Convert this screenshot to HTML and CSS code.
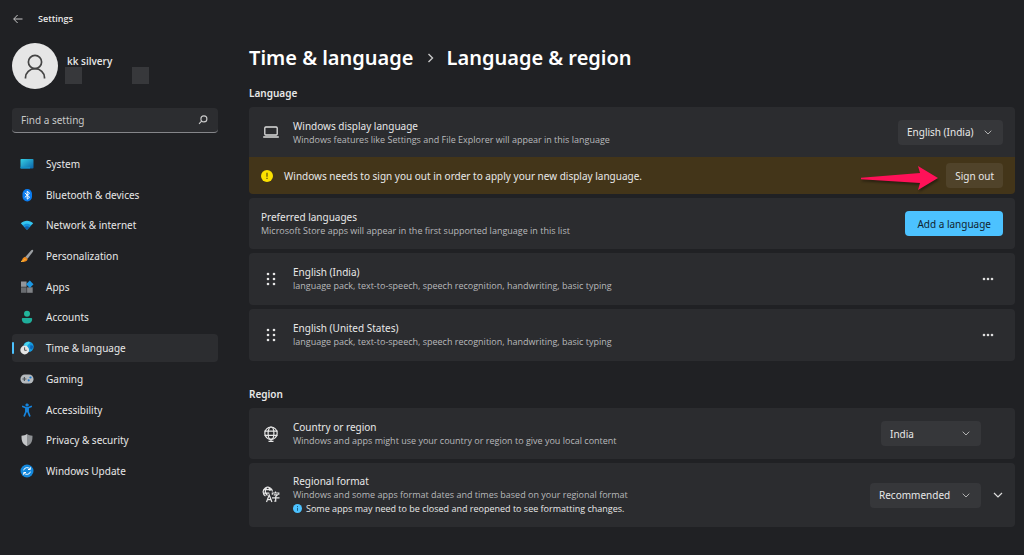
FILE: index.html
```html
<!DOCTYPE html>
<html lang="en">
<head>
  <meta charset="UTF-8">
  <meta name="viewport" content="width=device-width, initial-scale=1.0">
  <title>Settings</title>
  <link rel="stylesheet" href="styles.css">
</head>
<body>
  <div class="app">
    <aside class="sidebar">
      <div class="topbar">
        <button class="back" aria-label="Back">
          <svg width="10" height="10" viewBox="0 0 10 10" fill="none" stroke="#c8c8c8"><path d="M9.5 5H.8M4.6 1L.7 5l3.9 4"/></svg>
        </button>
        <span>Settings</span>
      </div>
      <div class="profile">
        <div class="avatar">
          <svg width="22" height="26" viewBox="0 0 22 26" fill="none" stroke="#444" stroke-width="1.7"><circle cx="11" cy="9" r="6.6"/><path d="M1.500 25.500v-1a9.500 8.800 0 0 1 19 0v1"/></svg>
        </div>
        <div class="user">
          <strong>kk silvery</strong>
          <div class="masks"><i></i><i></i></div>
        </div>
      </div>
      <div class="search">
        <input type="text" placeholder="Find a setting" aria-label="Find a setting">
        <svg width="10" height="10" viewBox="0 0 10 10" fill="none" stroke="#ccc" stroke-width="1.1"><circle cx="5.9" cy="3.9" r="3"/><path d="M3.6 6.2L1 8.800"/></svg>
      </div>
      <nav>
        <ul class="nav">
          <li><a href="#">
            <svg width="14" height="14" viewBox="0 0 14 14"><defs><linearGradient id="sys" x2="1" y2="1"><stop stop-color="#35d0e4"/><stop offset="1" stop-color="#0b62a8"/></linearGradient></defs><rect x=".5" y="2" width="13" height="9.5" rx=".8" fill="url(#sys)"/><path d="M.5 9.8h9.5v1.7H.5z" fill="#1591c6"/></svg>
            <span>System</span></a></li>
          <li><a href="#">
            <svg width="14" height="14" viewBox="0 0 14 14"><rect x="2.5" y="1" width="9.5" height="12.4" rx="4.7" fill="#0a7cf0"/><path d="M4.800 5l4.800 4.200-2.400 2V3.200l2.400 2L4.800 9.400" fill="none" stroke="#fff" stroke-width="1"/></svg>
            <span>Bluetooth &amp; devices</span></a></li>
          <li><a href="#">
            <svg width="14" height="14" viewBox="0 0 14 14"><path d="M.8 5.2C4 1.800 10 1.800 13.200 5.200L7 11.800z" fill="#35c5ef"/><path d="M2.800 7.300C5 5.200 9 5.200 11.200 7.300L7 11.800z" fill="#1591d8"/><path d="M4.600 9.200c1.400-1.200 3.400-1.200 4.800 0L7 11.800z" fill="#0b5fae"/></svg>
            <span>Network &amp; internet</span></a></li>
          <li><a href="#">
            <svg width="14" height="14" viewBox="0 0 14 14"><path d="M12.800.9c.7.5.4 1.300-.1 2L7.600 9.700 5.300 8 11 1.600c.6-.6 1.200-1 1.800-.7z" fill="#9ca0a4"/><path d="M5.200 7.800l2.400 2c.2 2.400-3 3.800-6.600 2.700C2.600 11.500 2 8.600 5.200 7.800z" fill="#f08a1d"/><path d="M1 12.500c2-.3 3.200-1 4.300-2.400" fill="none" stroke="#ffc03d"/></svg>
            <span>Personalization</span></a></li>
          <li><a href="#">
            <svg width="14" height="14" viewBox="0 0 14 14"><path d="M1 1.500h5.600v5.300H1z" fill="#92959a"/><path d="M1 7.300h5.600v5.500H1z" fill="#696c70"/><path d="M7.100 7.300h5.600v5.500H7.100z" fill="#7f8286"/><path d="M9.800.5l3.700 3.700-3.700 3.700-3.700-3.700z" fill="#1b98e4"/></svg>
            <span>Apps</span></a></li>
          <li><a href="#">
            <svg width="14" height="14" viewBox="0 0 14 14"><circle cx="7" cy="3.700" r="3" fill="#22b59b"/><path d="M2.800 8h8.400a1 1 0 0 1 1 1c0 3-2 4.500-5.200 4.500S1.800 12 1.800 9a1 1 0 0 1 1-1z" fill="#1fae9b"/></svg>
            <span>Accounts</span></a></li>
          <li class="current"><a href="#" aria-current="page">
            <svg width="14" height="14" viewBox="0 0 14 14"><circle cx="8.500" cy="5.700" r="5.200" fill="#159be0"/><path d="M4 3.500C6 .5 9 .2 10 1.300c-.3 2-2.500 2-3 4.400z" fill="#49d5ed"/><path d="M10.500 4l2.900 1-1.400 3.500-2-1z" fill="#0b65bb"/><circle cx="4.700" cy="9" r="4.400" fill="#e4e4e4"/><path d="M4.600 6.300v3h2.100" fill="none" stroke="#555"/></svg>
            <span>Time &amp; language</span></a></li>
          <li><a href="#">
            <svg width="14" height="14" viewBox="0 0 14 14"><rect x=".5" y="2.500" width="13" height="9" rx="4.300" fill="#b4b9bd"/><path d="M4.400 5v4M2.400 7h4" stroke="#50565b" stroke-width="1.200"/><circle cx="10.500" cy="5.500" r="1.100" fill="#1678d0"/><circle cx="8.700" cy="8.300" r="1.100" fill="#1678d0"/></svg>
            <span>Gaming</span></a></li>
          <li><a href="#">
            <svg width="14" height="14" viewBox="0 0 14 14" fill="none" stroke="#1684dc" stroke-width="1.700" stroke-linecap="round" stroke-linejoin="round"><circle cx="7" cy="2" r="1.300" fill="#1684dc" stroke-width=".6"/><path d="M2.800 3.500L7 5.200l4.200-1.700M5.900 5v4L4.300 12.800M8.100 5v4l1.600 3.800M7 5v3.500"/></svg>
            <span>Accessibility</span></a></li>
          <li><a href="#">
            <svg width="14" height="14" viewBox="0 0 14 14"><path d="M7 1c1.600 1.300 3.300 1.700 5.500 1.700 0 5-.6 8-5.500 10.500z" fill="#8d9093"/><path d="M7 1C5.400 2.300 3.700 2.700 1.500 2.700c0 5 .6 8 5.500 10.500z" fill="#c4c6c8"/></svg>
            <span>Privacy &amp; security</span></a></li>
          <li><a href="#">
            <svg width="14" height="14" viewBox="0 0 14 14" fill="none" stroke="#fff"><circle cx="7" cy="7" r="6.500" fill="#1488dc" stroke="none"/><path d="M3.600 6.300A3.500 3.500 0 0 1 10 5.300M10.300 3.200v2.300H8M10.400 7.700A3.500 3.500 0 0 1 4 8.700M3.700 10.800V8.500H6"/></svg>
            <span>Windows Update</span></a></li>
        </ul>
      </nav>
    </aside>

    <main>
      <h1>
        <a href="#">Time &amp; language</a>
        <svg width="7" height="10" viewBox="0 0 7 10" fill="none" stroke="#c8c8c8" stroke-width="1.400"><path d="M1.500 1l4 4-4 4"/></svg>
        <span>Language &amp; region</span>
      </h1>

      <section>
        <h2>Language</h2>
        <div class="group">
          <div class="card">
            <div class="icon">
              <svg width="16" height="12" viewBox="0 0 16 12" fill="none" stroke="#ddd" stroke-width="1.300"><rect x="1.800" y="1" width="12.400" height="8" rx="1"/><path d="M.2 11h15.600"/></svg>
            </div>
            <div class="text">
              <label class="title" for="display">Windows display language</label>
              <p>Windows features like Settings and File Explorer will appear in this language</p>
            </div>
            <div class="select display">
              <select id="display"><option>English (India)</option></select>
              <svg width="8" height="5" viewBox="0 0 8 5"><path d="M.7.7L4 4 7.300.7"/></svg>
            </div>
          </div>
          <div class="warning">
            <svg class="alert" width="12" height="12" viewBox="0 0 12 12"><circle cx="6" cy="6" r="6" fill="#fce100"/><path d="M6 2.800v3.900M6 7.800v1.300" stroke="#5a4c10" stroke-width="1.200"/></svg>
            <p>Windows needs to sign you out in order to apply your new display language.</p>
            <button class="btn">Sign out</button>
            <svg class="arrow" width="80" height="28" viewBox="0 0 80 28"><path d="M1 15.200v-1.400L60 9 58 2l20 12-20 12 2-7z" fill="#ff1158"/></svg>
          </div>
        </div>
        <div class="card preferred">
          <div class="text">
            <h3 class="title">Preferred languages</h3>
            <p>Microsoft Store apps will appear in the first supported language in this list</p>
          </div>
          <button class="btn primary">Add a language</button>
        </div>
        <div class="card lang">
          <div class="icon">
            <svg width="10" height="14" viewBox="0 0 10 14" fill="#e6e6e6"><circle cx="2" cy="2" r="1.300"/><circle cx="8" cy="2" r="1.300"/><circle cx="2" cy="7" r="1.300"/><circle cx="8" cy="7" r="1.300"/><circle cx="2" cy="12" r="1.300"/><circle cx="8" cy="12" r="1.300"/></svg>
          </div>
          <div class="text">
            <h3 class="title">English (India)</h3>
            <p>language pack, text-to-speech, speech recognition, handwriting, basic typing</p>
          </div>
          <button class="more" aria-label="More options">
            <svg width="12" height="4" viewBox="0 0 12 4" fill="#ddd"><circle cx="2" cy="2" r="1.300"/><circle cx="6" cy="2" r="1.300"/><circle cx="10" cy="2" r="1.300"/></svg>
          </button>
        </div>
        <div class="card lang">
          <div class="icon">
            <svg width="10" height="14" viewBox="0 0 10 14" fill="#e6e6e6"><circle cx="2" cy="2" r="1.300"/><circle cx="8" cy="2" r="1.300"/><circle cx="2" cy="7" r="1.300"/><circle cx="8" cy="7" r="1.300"/><circle cx="2" cy="12" r="1.300"/><circle cx="8" cy="12" r="1.300"/></svg>
          </div>
          <div class="text">
            <h3 class="title">English (United States)</h3>
            <p>language pack, text-to-speech, speech recognition, handwriting, basic typing</p>
          </div>
          <button class="more" aria-label="More options">
            <svg width="12" height="4" viewBox="0 0 12 4" fill="#ddd"><circle cx="2" cy="2" r="1.300"/><circle cx="6" cy="2" r="1.300"/><circle cx="10" cy="2" r="1.300"/></svg>
          </button>
        </div>
      </section>

      <section>
        <h2>Region</h2>
        <div class="card region">
          <div class="icon">
            <svg width="16" height="16" viewBox="0 0 16 16" fill="none" stroke="#e6e6e6" stroke-width="1.200"><circle cx="8" cy="7.200" r="6.200"/><ellipse cx="8" cy="7.200" rx="2.900" ry="6.200"/><path d="M1.500 5.200h13M1.500 9.300h13M8 13.400v2M5.500 15.400h5"/></svg>
          </div>
          <div class="text">
            <label class="title" for="country">Country or region</label>
            <p>Windows and apps might use your country or region to give you local content</p>
          </div>
          <div class="select country">
            <select id="country"><option>India</option></select>
            <svg width="8" height="5" viewBox="0 0 8 5"><path d="M.7.7L4 4 7.300.7"/></svg>
          </div>
          <div class="end"></div>
        </div>
        <div class="card format">
          <div class="icon">
            <svg width="18" height="18" viewBox="0 0 18 18" fill="none" stroke="#e6e6e6" stroke-width="1.200"><path d="M3.500 10A4.700 4.700 0 1 1 10.500 5.500M5.500 1c-3 2-3 6 0 8.500M6 1c1.500 1 2 2.500 2 4M1.300 3.700h9M1.300 7.200h6M4.500 16l2.700-7 2.700 7M5.500 13.700h3.500M13.500 5.500v1.500M10.300 8.800V7h6.500v1.800M11.700 8.900h3.700l-1.700 1.800v4.500h-1.400M10 11.900h7.500"/></svg>
          </div>
          <div class="text">
            <label class="title" for="format">Regional format</label>
            <p>Windows and some apps format dates and times based on your regional format</p>
            <p class="note">
              <svg width="9" height="9" viewBox="0 0 9 9"><circle cx="4.500" cy="4.500" r="4.500" fill="#4cc2ff"/><path d="M4.500 2v1M4.500 3.800v3" stroke="#1d5f86"/></svg>
              Some apps may need to be closed and reopened to see formatting changes.
            </p>
          </div>
          <div class="select recommended">
            <select id="format"><option>Recommended</option></select>
            <svg width="8" height="5" viewBox="0 0 8 5"><path d="M.7.7L4 4 7.300.7"/></svg>
          </div>
          <button class="end" aria-label="Expand">
            <svg width="10" height="6" viewBox="0 0 10 6" fill="none" stroke="#ddd" stroke-width="1.200"><path d="M1 1l4 4 4-4"/></svg>
          </button>
        </div>
      </section>
    </main>
  </div>
</body>
</html>
```

FILE: styles.css
```css
* {
  margin: 0;
  padding: 0;
  box-sizing: border-box;
}
body {
  background-color: #202124;
  color: #e8e8e8;
  font: 10px/14px "Noto Sans", "Open Sans", sans-serif;
}
svg {
  display: block;
  flex-shrink: 0;
}
a {
  color: inherit;
  text-decoration: none;
}
button,
input,
select {
  border: none;
  background: none;
  color: inherit;
  font: inherit;
}
.app {
  display: flex;
  gap: 31px;
  min-height: 100vh;
  padding: 0 9px 0 12px;
}

/* sidebar */
.sidebar {
  display: flex;
  flex-direction: column;
  width: 206px;
  flex-shrink: 0;
  padding: 12px 0 70px;
}
.topbar {
  display: flex;
  align-items: center;
  gap: 14px;
  font-family: "Open Sans", sans-serif;
  font-size: 9px;
  font-weight: 600;
}
.back {
  padding: 2px 1px;
}
.profile {
  display: flex;
  align-items: flex-start;
  gap: 9px;
  margin-top: 17px;
}
.avatar {
  display: flex;
  align-items: center;
  justify-content: center;
  width: 46px;
  height: 46px;
  border-radius: 50%;
  background-color: #e6e6e6;
}
.user {
  padding-top: 12px;
  font-family: "Open Sans", sans-serif;
  line-height: 12px;
}
.user strong {
  font-weight: 600;
}
.masks {
  display: flex;
  gap: 50px;
  margin-left: -2px;
}
.masks i {
  width: 17px;
  height: 17px;
  background-color: #37383b;
}
.search {
  display: flex;
  align-items: center;
  height: 25px;
  margin: 19px 0 17px;
  padding: 0 10px 0 9px;
  border-bottom: 1px solid #85868a;
  border-radius: 4px;
  background-color: #2c2d30;
}
.search input {
  flex: 1;
  min-width: 0;
  outline: none;
}
.search input::placeholder {
  color: #c8c8c8;
}
nav {
  flex: 1;
  display: flex;
}
.nav {
  flex: 1;
  display: flex;
  flex-direction: column;
  justify-content: space-between;
  list-style: none;
}
.nav a {
  display: flex;
  align-items: center;
  gap: 12px;
  height: 28px;
  padding-left: 8px;
  border-radius: 4px;
}
.nav li.current a {
  position: relative;
  background-color: #2c2d30;
}
.nav li.current a::before {
  content: "";
  position: absolute;
  left: 0;
  top: 8px;
  width: 2px;
  height: 12px;
  border-radius: 1px;
  background-color: #4cc2ff;
}

/* content */
main {
  flex: 1;
  min-width: 0;
  padding-top: 44px;
}
h1 {
  display: flex;
  align-items: center;
  gap: 13px;
  color: #fff;
  font-size: 20px;
  font-weight: 600;
  line-height: 28px;
}
h2 {
  margin-bottom: 7px;
  font-size: 10px;
  font-weight: 600;
  line-height: 14px;
}
section {
  padding-top: 14px;
}
section + section {
  padding-top: 26px;
}
.group {
  overflow: hidden;
  border-radius: 4px;
}
.group .card {
  border-radius: 0;
}
.card {
  display: flex;
  align-items: center;
  min-height: 50px;
  padding: 0 12px;
  border-radius: 4px;
  background-color: #2b2c2f;
}
.group + .card,
.card + .card {
  margin-top: 4px;
}
.icon {
  display: flex;
  justify-content: center;
  width: 20px;
  margin-right: 12px;
}
.text {
  flex: 1;
}
.title {
  display: block;
  font-size: 10px;
  font-weight: 400;
  line-height: 14px;
}
.text p {
  color: #b8b9bb;
  font-family: "Open Sans", sans-serif;
  font-size: 9px;
  line-height: 13px;
}
.preferred,
.region {
  min-height: 51px;
}
.lang {
  min-height: 52px;
}
.lang .text {
  padding-bottom: 2px;
}
.format {
  min-height: 64px;
}
.text .note {
  display: flex;
  align-items: center;
  gap: 4px;
  color: #e8e8e8;
  line-height: 15px;
}
.warning {
  position: relative;
  display: flex;
  align-items: center;
  gap: 11px;
  min-height: 37px;
  padding: 0 12px;
  background-color: #433519;
}
.warning p {
  flex: 1;
}
.arrow {
  position: absolute;
  right: 75px;
  top: 7px;
  filter: drop-shadow(1px 2px 1px #0006);
}
.btn {
  height: 25px;
  padding: 0 9px;
  border-radius: 4px;
  background-color: #50432a;
}
.btn.primary {
  padding: 0 12px;
  background-color: #4cc2ff;
  color: #10222e;
}
.select {
  display: flex;
  align-items: center;
  position: relative;
}
.select select {
  width: 100%;
  height: 25px;
  padding: 0 24px 0 9px;
  appearance: none;
  border-radius: 4px;
  background-color: #36373a;
}
.select svg {
  position: absolute;
  right: 11px;
  fill: none;
  stroke: #b0b0b0;
  pointer-events: none;
}
.display {
  width: 105px;
}
.country {
  width: 100px;
}
.recommended {
  width: 111px;
}
.end {
  display: flex;
  justify-content: flex-end;
  width: 22px;
}
.more {
  padding: 8px 9px;
}
```
